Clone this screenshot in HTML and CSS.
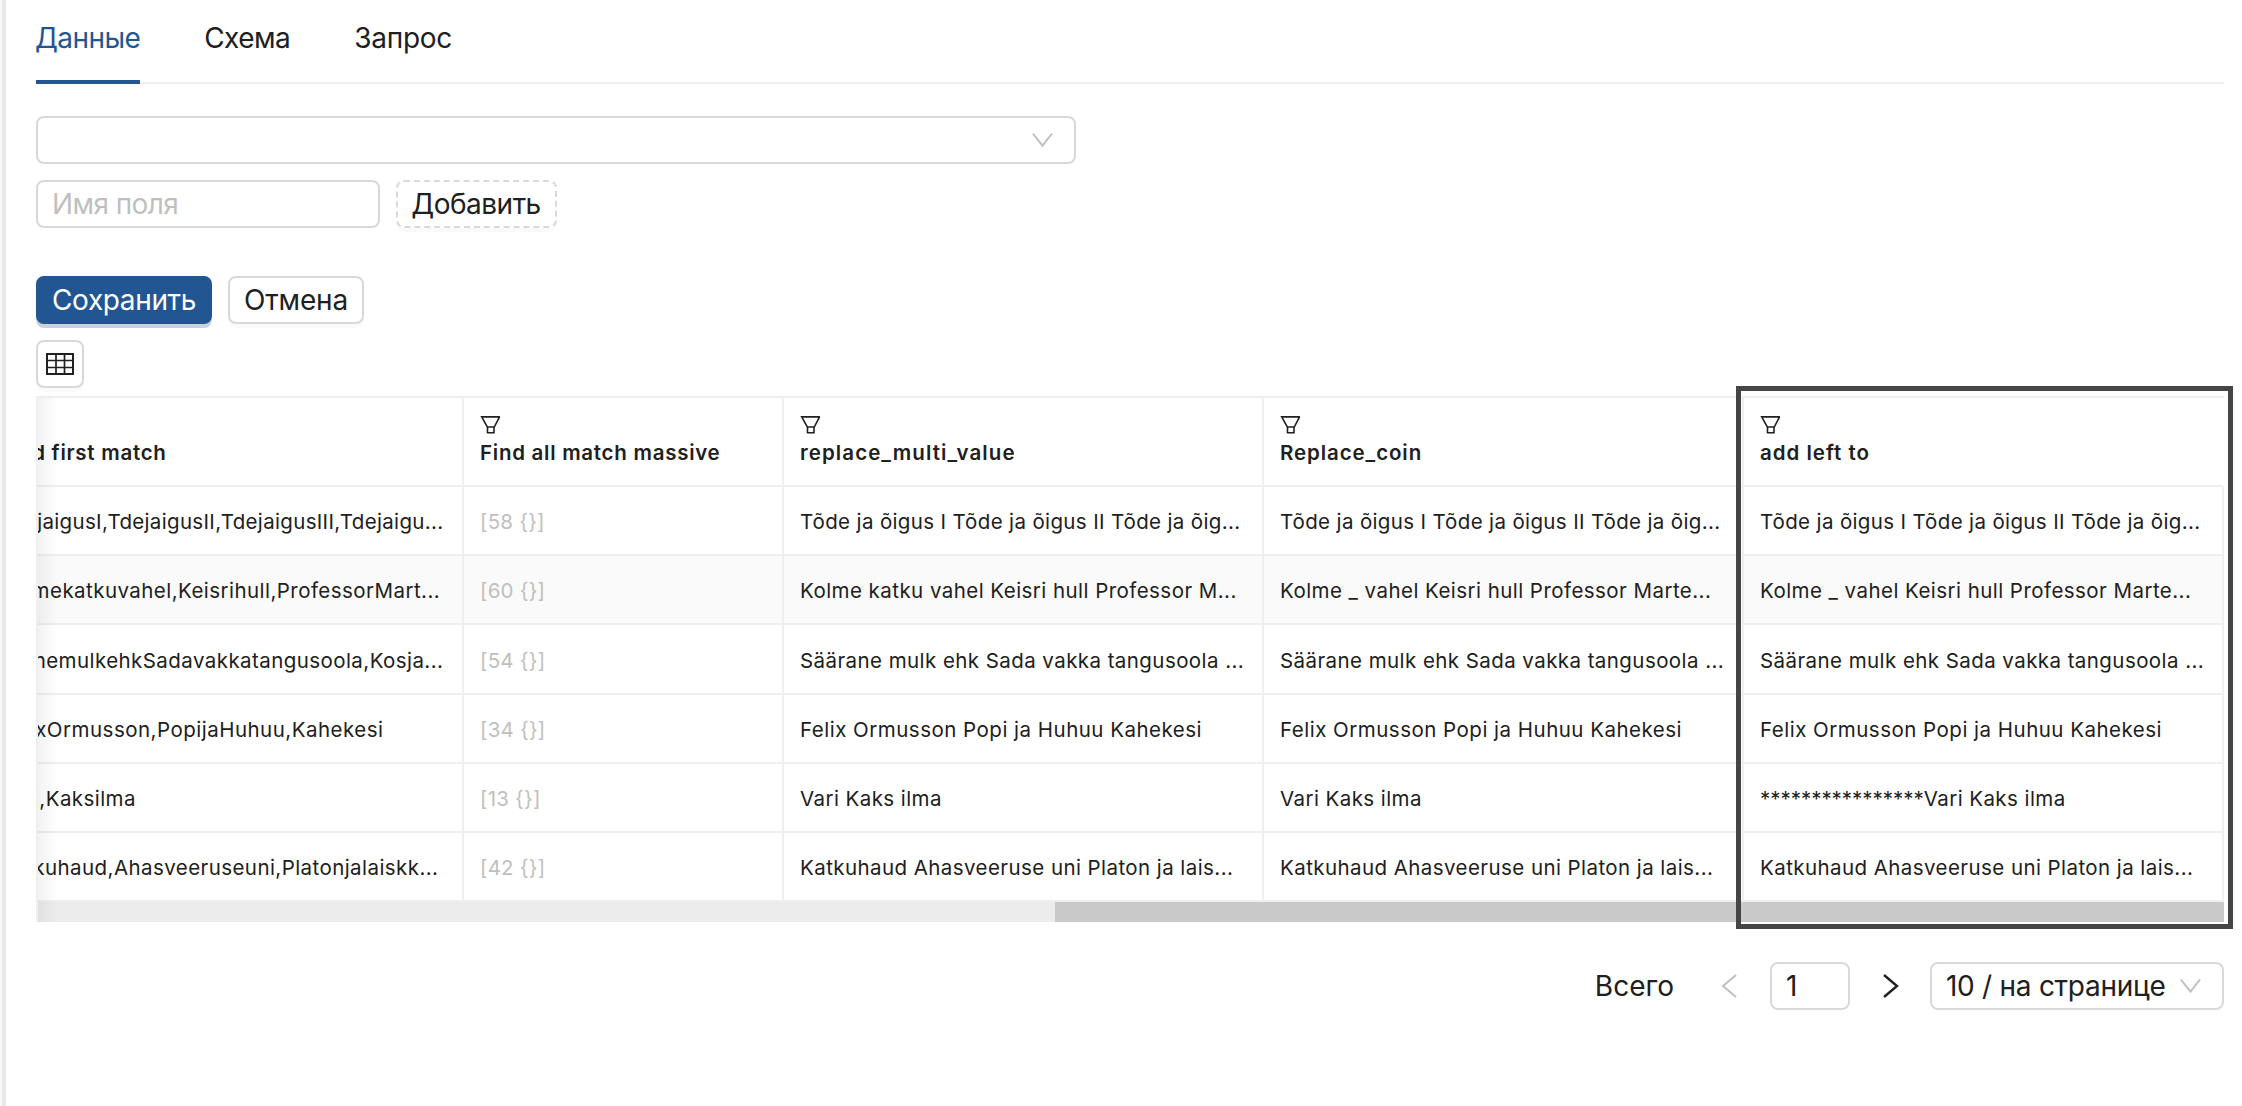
FILE: index.html
```html
<!DOCTYPE html>
<html lang="ru">
<head>
<meta charset="utf-8">
<title>Данные</title>
<link rel="stylesheet" href="styles.css">
</head>
<body>
<svg class="sprite" aria-hidden="true">
  <symbol id="funnel" viewBox="0 0 20 20"><path d="M1.700 1.900H19.500L14.300 12H7.300zM7.500 12V17.700H14V12" fill="none" stroke="currentColor" stroke-width="1.6"/></symbol>
  <symbol id="down" viewBox="0 0 22 16"><path d="M1.800 1.500 11.500 13.700 21 1.500" fill="none" stroke="currentColor" stroke-width="2"/></symbol>
</svg>
<main class="page">
  <nav class="tabs">
    <a class="tab active"><span class="t-data">Данные</span></a>
    <a class="tab"><span class="t-schema">Схема</span></a>
    <a class="tab"><span class="t-query">Запрос</span></a>
  </nav>
  <div class="select wide"><svg class="chev"><use href="#down"/></svg></div>
  <div class="line field-line">
    <div class="input"><span class="t-ph">Имя поля</span></div>
    <button class="btn dashed"><span class="t-add">Добавить</span></button>
  </div>
  <div class="line action-line">
    <button class="btn primary"><span class="t-save">Сохранить</span></button>
    <button class="btn cancel"><span class="t-cancel">Отмена</span></button>
  </div>
  <button class="btn icon-btn"><svg class="grid-icon" viewBox="0 0 28 22"><path d="M10 1V21M18.500 1V21M1 7.500H27M1 14.500H27" fill="none" stroke="currentColor" stroke-width="1.7"/><path d="M1 1H27V21H1z" fill="none" stroke="currentColor" stroke-width="2"/></svg></button>
  <section class="table">
    <div class="rows">
      <div class="row head">
        <div class="cell c1"><svg class="fun"><use href="#funnel"/></svg><b>Find first match</b></div>
        <div class="cell c2"><svg class="fun"><use href="#funnel"/></svg><b>Find all match massive</b></div>
        <div class="cell"><svg class="fun"><use href="#funnel"/></svg><b class="h-multi">replace_multi_value</b></div>
        <div class="cell"><svg class="fun"><use href="#funnel"/></svg><b class="h-coin">Replace_coin</b></div>
        <div class="cell"><svg class="fun"><use href="#funnel"/></svg><b class="h-left">add left to</b></div>
      </div>
      <div class="row snug"><div class="cell c1"><span>TdejaigusI,TdejaigusII,TdejaigusIII,Tdejaigu...</span></div><div class="cell c2"><span>[58 {}]</span></div><div class="cell"><span>Tõde ja õigus I Tõde ja õigus II Tõde ja õig...</span></div><div class="cell"><span>Tõde ja õigus I Tõde ja õigus II Tõde ja õig...</span></div><div class="cell"><span>Tõde ja õigus I Tõde ja õigus II Tõde ja õig...</span></div></div>
      <div class="row hover"><div class="cell c1"><span>Kolmekatkuvahel,Keisrihull,ProfessorMart...</span></div><div class="cell c2"><span>[60 {}]</span></div><div class="cell"><span>Kolme katku vahel Keisri hull Professor M...</span></div><div class="cell"><span>Kolme _ vahel Keisri hull Professor Marte...</span></div><div class="cell"><span>Kolme _ vahel Keisri hull Professor Marte...</span></div></div>
      <div class="row tall"><div class="cell c1"><span>SranemulkehkSadavakkatangusoola,Kosja...</span></div><div class="cell c2"><span>[54 {}]</span></div><div class="cell"><span>Säärane mulk ehk Sada vakka tangusoola ...</span></div><div class="cell"><span>Säärane mulk ehk Sada vakka tangusoola ...</span></div><div class="cell"><span>Säärane mulk ehk Sada vakka tangusoola ...</span></div></div>
      <div class="row loose"><div class="cell c1"><span>FelixOrmusson,PopijaHuhuu,Kahekesi</span></div><div class="cell c2"><span>[34 {}]</span></div><div class="cell"><span>Felix Ormusson Popi ja Huhuu Kahekesi</span></div><div class="cell"><span>Felix Ormusson Popi ja Huhuu Kahekesi</span></div><div class="cell"><span>Felix Ormusson Popi ja Huhuu Kahekesi</span></div></div>
      <div class="row"><div class="cell c1"><span>Vari,Kaksilma</span></div><div class="cell c2"><span>[13 {}]</span></div><div class="cell"><span>Vari Kaks ilma</span></div><div class="cell"><span>Vari Kaks ilma</span></div><div class="cell"><span><span class="stars">****************</span>Vari Kaks ilma</span></div></div>
      <div class="row"><div class="cell c1"><span>Katkuhaud,Ahasveeruseuni,Platonjalaiskk...</span></div><div class="cell c2"><span>[42 {}]</span></div><div class="cell"><span>Katkuhaud Ahasveeruse uni Platon ja lais...</span></div><div class="cell"><span>Katkuhaud Ahasveeruse uni Platon ja lais...</span></div><div class="cell"><span>Katkuhaud Ahasveeruse uni Platon ja lais...</span></div></div>
    </div>
    <div class="track"><div class="thumb"></div></div>
    <div class="fade"></div>
    <div class="highlight"></div>
  </section>
  <footer class="pager">
    <span class="t-total">Всего</span>
    <svg class="arrow prev" viewBox="0 0 16 24"><path d="M15 1 2 12 15 23" fill="none" stroke="currentColor" stroke-width="2"/></svg>
    <div class="input page-no"><span>1</span></div>
    <svg class="arrow next" viewBox="0 0 16 24"><path d="M1 1 14 12 1 23" fill="none" stroke="currentColor" stroke-width="2.400"/></svg>
    <div class="select size"><span class="t-size">10 / на странице</span><svg class="chev"><use href="#down"/></svg></div>
  </footer>
</main>
</body>
</html>
```
FILE: styles.css
```css
* { box-sizing: border-box; }
body {
  margin: 0;
  height: 1106px;
  overflow: hidden;
  background: #fff;
  color: #202020;
  font-family: Inter, "Noto Sans", sans-serif;
  font-size: 28px;
}
.sprite { position: absolute; width: 0; height: 0; }
.page {
  height: 1106px;
  padding: 0 18px 0 34px;
  border-left: 2px solid #f8f8f8;
  box-shadow: inset 4px 0 #e8e8e8;
}
.tabs { display: flex; gap: 64px; height: 84px; border-bottom: 2px solid #efefef; }
.tab { height: 84px; padding-top: 16px; line-height: 44px; white-space: nowrap; }
.tab.active { color: #225692; border-bottom: 4px solid #225692; }
.t-data { letter-spacing: -0.6px; margin-left: -1px; }
.t-schema { letter-spacing: -0.5px; }
.t-query { letter-spacing: -0.3px; }
.t-ph { letter-spacing: -0.6px; }
.t-add { letter-spacing: -0.5px; margin-left: -1px; }
.t-save { letter-spacing: -0.37px; }
.t-cancel { letter-spacing: -0.2px; }
.t-size { letter-spacing: -0.27px; }
.select, .input {
  display: flex;
  align-items: center;
  height: 48px;
  border: 2px solid #d9d9d9;
  border-radius: 8px;
  white-space: nowrap;
}
.wide { width: 1040px; margin-top: 32px; justify-content: flex-end; padding-right: 21px; }
.chev { width: 22px; height: 16px; color: #bfbfbf; flex: none; }
.line { display: flex; gap: 16px; }
.field-line { margin-top: 16px; }
.field-line .input { width: 344px; padding-left: 14px; color: #bfbfbf; }
.btn {
  display: flex;
  align-items: center;
  justify-content: center;
  height: 48px;
  padding: 0;
  border: 2px solid #d9d9d9;
  border-radius: 8px;
  background: #fff;
  color: #202020;
  font: inherit;
  white-space: nowrap;
  box-shadow: 0 4px 0 rgba(0, 0, 0, 0.02);
}
.dashed { width: 161px; border-style: dashed; }
.action-line { margin-top: 48px; }
.primary { width: 176px; color: #fff; background: #225692; border-color: #225692; box-shadow: 0 4px 0 #c9d1d9; }
.cancel { width: 136px; }
.icon-btn { width: 48px; margin-top: 16px; }
.grid-icon { width: 28px; height: 22px; }
.table {
  position: relative;
  width: 2188px;
  height: 526px;
  margin-top: 8px;
  border-top: 2px solid #efefef;
  border-left: 2px solid #efefef;
  font-size: 20.5px;
}
.rows { overflow: hidden; }
.row { display: flex; height: 69px; width: 2240px; margin-left: -54px; letter-spacing: 0.43px; }
.row.snug { letter-spacing: 0.36px; }
.row.snug .c1 { letter-spacing: 0.33px; }
.row.loose { letter-spacing: 0.49px; }
.row.tall { height: 70px; }
.row.hover { background: #fafafa; letter-spacing: 0.45px; }
.row.head { height: 89px; }
.cell {
  display: flex;
  align-items: center;
  flex: none;
  width: 480px;
  padding: 2px 0 0 16px;
  border-right: 2px solid #efefef;
  border-bottom: 2px solid #efefef;
  white-space: nowrap;
}
.c2 { width: 320px; color: #bfbfbf; letter-spacing: 0.2px; }
.head .cell { flex-direction: column; align-items: flex-start; padding-top: 17px; color: #202020; }
.head .cell:last-child { border-right-color: transparent; }
.head b { font-weight: 600; line-height: 28px; margin-top: 4px; letter-spacing: 0.73px; }
.head .h-multi { letter-spacing: 1.08px; }
.head .h-coin { letter-spacing: 0.91px; }
.head .h-left { letter-spacing: 0.98px; }
.stars { letter-spacing: -0.04px; }
.fun { width: 20px; height: 20px; flex: none; }
.track { height: 20px; background: #ececec; }
.thumb { width: 1169px; height: 20px; margin-left: auto; background: #c9c9c9; }
.fade {
  position: absolute;
  left: 0;
  top: 0;
  width: 20px;
  height: 524px;
  background: linear-gradient(to right, rgba(0, 0, 0, 0.05), rgba(0, 0, 0, 0));
}
.highlight { position: absolute; left: 1698px; top: -12px; width: 497px; height: 543px; border: 5px solid #454545; }
.pager { display: flex; align-items: center; height: 48px; width: 2188px; margin-top: 40px; justify-content: flex-end; }
.arrow { width: 16px; height: 24px; flex: none; }
.prev { color: #bfbfbf; margin: 0 33px 0 47px; }
.next { margin: 0 31px 0 33px; }
.page-no { width: 80px; padding-left: 14px; }
.size { width: 294px; padding: 0 21px 0 14px; justify-content: space-between; }
```
